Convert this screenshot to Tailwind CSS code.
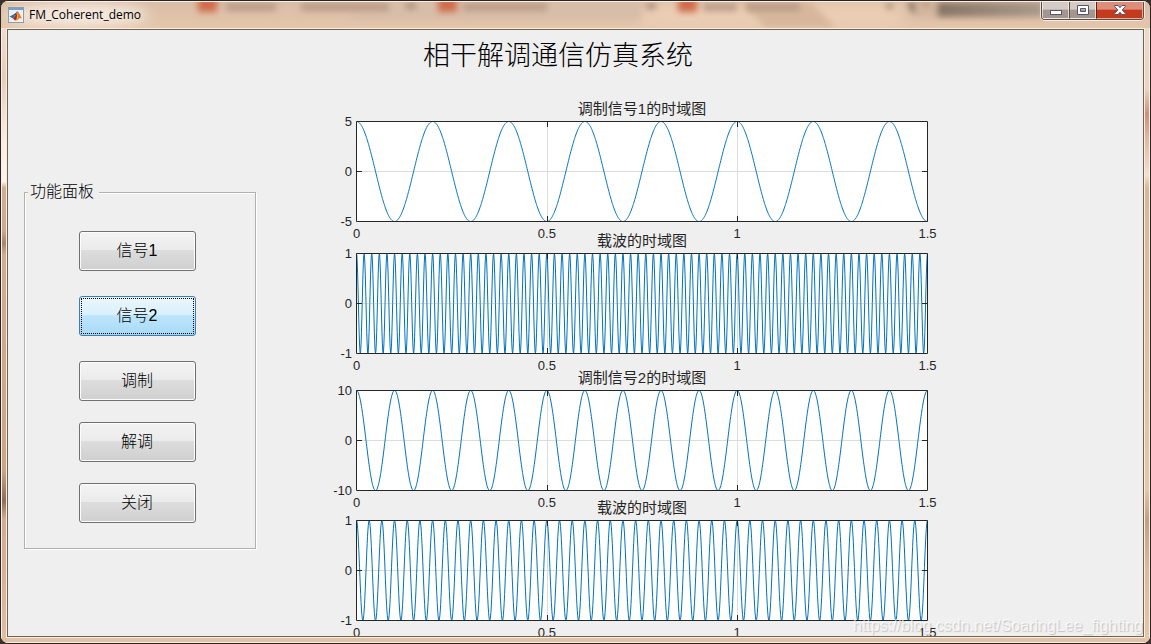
<!DOCTYPE html>
<html lang="zh-CN">
<head>
  <meta charset="UTF-8" />
  <meta name="viewport" content="width=device-width, initial-scale=1.0" />
  <title>FM_Coherent_demo</title>
  <script src="https://cdn.jsdelivr.net/npm/@tailwindcss/browser@4"></script>
</head>
<body class="bg-[#3a3030] font-['Liberation_Sans','Noto_Sans_CJK_SC',sans-serif] text-black">
  <div class="relative flex h-screen flex-col overflow-hidden rounded-lg border border-[#2c2422] bg-[#e0c2a6]">

    <!-- title bar -->
    <header class="relative flex h-[27px] shrink-0 items-start justify-between overflow-hidden border-t border-[#fbeee6] bg-linear-to-b from-[#d9bda6] to-[#e4c6ab]">
      <svg class="absolute inset-0 h-full w-full" viewBox="0 0 1149 26" preserveAspectRatio="none" aria-hidden="true">
        <defs>
          <filter id="soft" x="-20%" y="-60%" width="140%" height="220%"><feGaussianBlur stdDeviation="3" /></filter>
          <filter id="glow" x="-20%" y="-60%" width="140%" height="220%"><feGaussianBlur stdDeviation="7" /></filter>
          <linearGradient id="shade">
            <stop offset="0" stop-color="#7d6958" />
            <stop offset="1" stop-color="#ab9a8b" />
          </linearGradient>
        </defs>
        <path d="M640 0H900V26H640z" fill="#eaceb3" filter="url(#glow)" />
        <path d="M350 0H640V18H350z" fill="#d8bea8" filter="url(#soft)" />
        <path d="M740 0h70l25 26h-70z" fill="#d7b79c" filter="url(#soft)" />
        <g filter="url(#soft)">
          <path d="M225 1h50v8h-50zM300 1h88v8h-88zM462 1h84v8h-84zM702 1h34v8h-34zM745 1h54v8h-54z" fill="#b99c86" />
          <path d="M405 1h10v6h-10zM645 1h10v6h-10zM885 1h7v6h-7z" fill="#a98d79" />
          <path d="M197 -4h19v14h-19zM437 -4h19v14h-19zM677 -4h19v14h-19z" fill="#d06c4c" />
          <path d="M907 0H1042V15H918Q909 12 907 0z" fill="url(#shade)" />
          <path d="M914 -4h22v20h-22z" fill="#d3b79f" />
          <path d="M921 0h8v5h-8z" fill="#b3947c" />
        </g>
        <ellipse cx="76" cy="13" rx="72" ry="11" fill="#f7ece3" filter="url(#glow)" />
      </svg>
      <div class="relative flex items-center gap-[5px] pl-[7px] pt-[5px]">
        <svg class="h-4 w-4" viewBox="0 0 16 16" aria-hidden="true">
          <rect x=".5" y=".5" width="15" height="15" fill="#eef0f2" stroke="#8d9dab" />
          <path d="M1 1h14v2H1z" fill="#6fa3d3" />
          <path d="M1.500 9.500 5.500 7.500 7.500 9 5 11.500z" fill="#2d6da8" />
          <path d="M5.500 7.500Q8 6 9.300 4L7.500 9z" fill="#3b4d78" />
          <path d="M9.300 4Q8 9.500 5 11.500L7 13.500Q9 13 10 10z" fill="#a8281c" />
          <path d="M9.300 4Q11 5 14 12 12.500 10.500 11 11.500 9.500 13.800 7 13.500 9.500 11 9.300 4z" fill="#e87a22" />
          <path d="M9.500 5.500Q10.500 8 10 11.500L9 12z" fill="#f6c04a" />
        </svg>
        <h1 class="font-['Open_Sans','Noto_Sans_CJK_SC',sans-serif] text-xs leading-4">FM_Coherent_demo</h1>
      </div>
      <div class="relative mr-[6px] flex h-[18px] overflow-hidden rounded-b border border-t-0 border-[#5a4d4a] shadow-[0_0_0_1px_#ffffffb0]">
        <button type="button" aria-label="最小化" class="flex w-[27px] items-center justify-center border border-t-0 border-white/60 bg-linear-to-b from-[#d5cbc5] from-45% to-[#a3968f] to-50%">
          <svg class="mt-1 h-[5px] w-3" viewBox="0 0 12 5" aria-hidden="true"><rect x=".5" y=".5" width="11" height="4" fill="#fff" stroke="#53566b" /></svg>
        </button>
        <button type="button" aria-label="最大化" class="flex w-[27px] items-center justify-center border border-t-0 border-l-[#5a4d4a] border-white/60 bg-linear-to-b from-[#d5cbc5] from-45% to-[#a3968f] to-50%">
          <svg class="h-[10px] w-3" viewBox="0 0 12 10" aria-hidden="true"><path d="M.5.5h11v9H.5zM3.500 3.500v3h5v-3z" fill="#fff" fill-rule="evenodd" stroke="#53566b" /></svg>
        </button>
        <button type="button" aria-label="关闭窗口" class="flex w-[47px] items-center justify-center border border-t-0 border-l-[#6b1c10] border-[#f0a898] bg-linear-to-b from-[#dd8e7a] from-45% to-[#c43a1c] to-50%">
          <svg class="h-[10px] w-3" viewBox="0 0 12 10" aria-hidden="true"><path d="M.7.5h3.400L6 2.700 7.900.5h3.400v1L8.200 5l3.100 3.500v1H7.900L6 7.300 4.100 9.500H.7v-1L3.800 5 .7 1.500z" fill="#fff" stroke="#53566b" /></svg>
        </button>
      </div>
    </header>

    <div class="flex min-h-0 flex-1 border-x border-b border-[#fbeee6]">
      <div class="w-1 bg-[linear-gradient(#f3dccd,#e8cdbb_8%,#fbe9de_17%,#fff5ee_25%,#d3ad90_26%,#cfa98c_33%,#a98669_35%,#d2ac8f_37%,#cda486_72%,#8f6f58_77%,#d3ad90_80%,#d9ab93_86%,#e0bf9f)]"></div>

      <div class="mb-1 min-w-0 flex-1 border border-[#fbeedb]">
        <main class="relative h-full overflow-hidden border border-[#6b6355] bg-[#efefef]">
          <h2 class="mb-[23px] pr-[35px] pt-2 text-center text-[27px] font-light leading-9">相干解调通信仿真系统</h2>

          <div class="flex items-start">
            <!-- function panel -->
            <fieldset class="mt-[85px] ml-4 flex h-[367px] w-[232px] shrink-0 flex-col items-center border border-[#b0b0b0] shadow-[1px_1px_0_#fff,inset_1px_1px_0_#fff]">
              <legend class="relative ml-[3px] bg-[#efefef] pl-[2px] pr-[5px] text-base font-light leading-5">功能面板</legend>
              <div class="flex flex-col gap-[21px] pt-[29px] pr-[6px]">
                <div class="flex flex-col gap-[25px]">
                  <button type="button" class="h-10 w-[117px] rounded-[3px] border border-[#707070] bg-[linear-gradient(#f3f3f3,#ebebeb_48%,#dddddd_48%,#cfcfcf)] text-base font-light shadow-[inset_0_0_0_1px_#fcfcfc]">信号1</button>
                  <button type="button" class="h-10 w-[117px] rounded-[3px] border border-[#3c7fb1] bg-[linear-gradient(#eaf6fd,#d9f0fc_48%,#bee6fd_48%,#a7d9f5)] text-base font-light outline-1 -outline-offset-3 outline-dotted outline-black">信号2</button>
                  <button type="button" class="h-10 w-[117px] rounded-[3px] border border-[#707070] bg-[linear-gradient(#f3f3f3,#ebebeb_48%,#dddddd_48%,#cfcfcf)] text-base font-light shadow-[inset_0_0_0_1px_#fcfcfc]">调制</button>
                </div>
                <button type="button" class="h-10 w-[117px] rounded-[3px] border border-[#707070] bg-[linear-gradient(#f3f3f3,#ebebeb_48%,#dddddd_48%,#cfcfcf)] text-base font-light shadow-[inset_0_0_0_1px_#fcfcfc]">解调</button>
                <button type="button" class="h-10 w-[117px] rounded-[3px] border border-[#707070] bg-[linear-gradient(#f3f3f3,#ebebeb_48%,#dddddd_48%,#cfcfcf)] text-base font-light shadow-[inset_0_0_0_1px_#fcfcfc]">关闭</button>
              </div>
            </fieldset>

            <div id="plots" class="ml-[66px] mr-[215px] min-w-0 flex-1 text-[13px] text-[#262626]"></div>
          </div>

          <p class="absolute right-0 bottom-0 text-base leading-5 text-white/70 [text-shadow:1px_1px_1px_#00000030]">https://blog.csdn.net/SoaringLee_fighting</p>
        </main>
      </div>

      <div class="w-1 bg-[linear-gradient(#ecd9ca,#ead3c2_10%,#cf8f7c_14%,#e3b7a5_18%,#f3e0d3_24%,#d9b79c_26%,#e6c7ab_75%,#c39f86_80%,#dcb99f_88%,#e6c7ab)]"></div>
    </div>
  </div>

  <script>
    const plots = [
      { title: '调制信号1的时域图', amp: 5, freq: 5, gap: '' },
      { title: '载波的时域图', amp: 1, freq: 50, gap: 'mt-[7px]' },
      { title: '调制信号2的时域图', amp: 10, freq: 10, gap: 'mt-3' },
      { title: '载波的时域图', amp: 1, freq: 30, gap: 'mt-[5px]' },
    ];
    const W = 571, H = 100, T = 1.5, DT = 0.001;

    // cosine from t = 0 to T, sampled every DT seconds
    function curve(freq) {
      const pts = [];
      for (let i = 0; i <= T / DT; i++) {
        const t = i * DT;
        const x = 0.5 + t / T * W;
        const y = 0.5 + H / 2 - Math.cos(2 * Math.PI * freq * t) * H / 2;
        pts.push(x.toFixed(2) + ',' + y.toFixed(2));
      }
      return pts.join(' ');
    }

    document.getElementById('plots').innerHTML = plots.map(p => `
      <figure class="${p.gap}">
        <figcaption class="h-6 pl-[34px] text-center text-[15px] leading-6">${p.title}</figcaption>
        <div class="flex gap-1">
          <div class="flex w-[30px] shrink-0 flex-col justify-between text-right">
            ${[p.amp, 0, -p.amp].map(v => `<span class="flex h-px items-center justify-end">${v}</span>`).join('')}
          </div>
          <div class="min-w-0 flex-1">
            <svg class="block h-[101px] w-full" viewBox="0 0 572 101" preserveAspectRatio="none" fill="none" role="img" aria-label="${p.title}">
              <path d="M0 0H572V101H0z" fill="#fff" />
              <path d="M191.5 0V101M381.5 0V101M0 50.5H572" stroke="#dcdcdc" />
              <polyline points="${curve(p.freq)}" stroke="#0072bd" stroke-linejoin="round" />
              <path d="M.5.5H571.5V100.5H.5zM191.500 0v6M381.500 0v6M191.500 101v-6M381.500 101v-6M0 50.500h6M572 50.500h-6" stroke="#262626" />
            </svg>
            <div class="-mb-6 flex h-6 justify-between leading-6">
              ${['0', '0.5', '1', '1.5'].map(v => `<span class="flex w-px justify-center">${v}</span>`).join('')}
            </div>
          </div>
        </div>
      </figure>`).join('');
  </script>
</body>
</html>
